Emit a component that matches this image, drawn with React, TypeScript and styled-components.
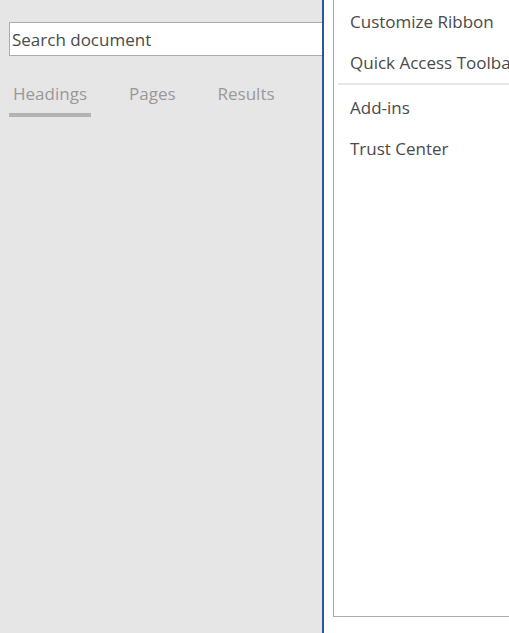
import styled, { createGlobalStyle } from 'styled-components';

// -----------------------------------------------------------------------------

const GlobalStyle = createGlobalStyle`
	html, body {
		margin: 0;
		padding: 0;
		height: 100%;
		overflow: hidden;
		background: #ffffff;
	}

	#root {
		height: 100%;
	}
`;

const tabs = ['Headings', 'Pages', 'Results'];
const menuTop = ['Customize Ribbon', 'Quick Access Toolbar'];
const menuBottom = ['Add-ins', 'Trust Center'];

export default function App(): JSX.Element {
	return (
		<>
			<GlobalStyle />
			<Screen>
				<NavPane>
					<SearchBox>
						<SearchInput placeholder="Search document" />
					</SearchBox>
					<Tabs>
						{tabs.map((tab, i) => (
							<Tab key={tab} $active={i === 0}>
								{tab}
							</Tab>
						))}
					</Tabs>
				</NavPane>

				<OptionsArea>
					<Panel>
						{menuTop.map((item) => (
							<MenuItem key={item}>{item}</MenuItem>
						))}
						<Separator />
						{menuBottom.map((item) => (
							<MenuItem key={item}>{item}</MenuItem>
						))}
					</Panel>
				</OptionsArea>
			</Screen>
		</>
	);
}

// -----------------------------------------------------------------------------

const font = `"Segoe UI", "Open Sans", "Noto Sans", sans-serif`;

const Screen = styled.div`
	display: flex;
	height: 100%;
	width: 100%;
	font-family: ${font};
`;

const NavPane = styled.div`
	flex: 0 0 322px;
	background: #e6e6e6;
	border-right: 2px solid #2b579a;
	padding-top: 22px;
	overflow: hidden;
`;

const SearchBox = styled.div`
	margin-left: 9px;
	width: 340px;
	height: 34px;
	box-sizing: border-box;
	border: 1px solid #ababab;
	background: #ffffff;
	display: flex;
	align-items: center;
`;

const SearchInput = styled.input`
	border: none;
	outline: none;
	background: transparent;
	width: 100%;
	padding: 0 0 0 2px;
	font-family: ${font};
	font-size: 17px;
	color: #4a4a4a;

	&::placeholder {
		color: #4a4a4a;
		opacity: 1;
	}
`;

const Tabs = styled.div`
	display: flex;
	gap: 34px;
	margin: 21px 0 0 9px;
`;

const Tab = styled.div<{ $active?: boolean }>`
	padding: 0 4px;
	height: 40px;
	box-sizing: border-box;
	font-size: 17px;
	line-height: 34px;
	color: #999999;
	border-bottom: 4px solid ${(p) => (p.$active ? '#b3b3b3' : 'transparent')};
`;

const OptionsArea = styled.div`
	flex: 1;
	min-width: 0;
	background: #ffffff;
	padding-left: 9px;
	overflow: hidden;
`;

const Panel = styled.div`
	height: 617px;
	box-sizing: border-box;
	border-left: 1px solid #ababab;
	border-bottom: 1px solid #ababab;
	padding: 1px 0 0 16px;
	width: 400px;
`;

const MenuItem = styled.div`
	height: 41px;
	line-height: 41px;
	font-size: 17px;
	color: #4a4a4a;
	white-space: nowrap;
`;

const Separator = styled.div`
	height: 2px;
	background: #e6e6e6;
	margin: 0 0 2px -12px;
`;
